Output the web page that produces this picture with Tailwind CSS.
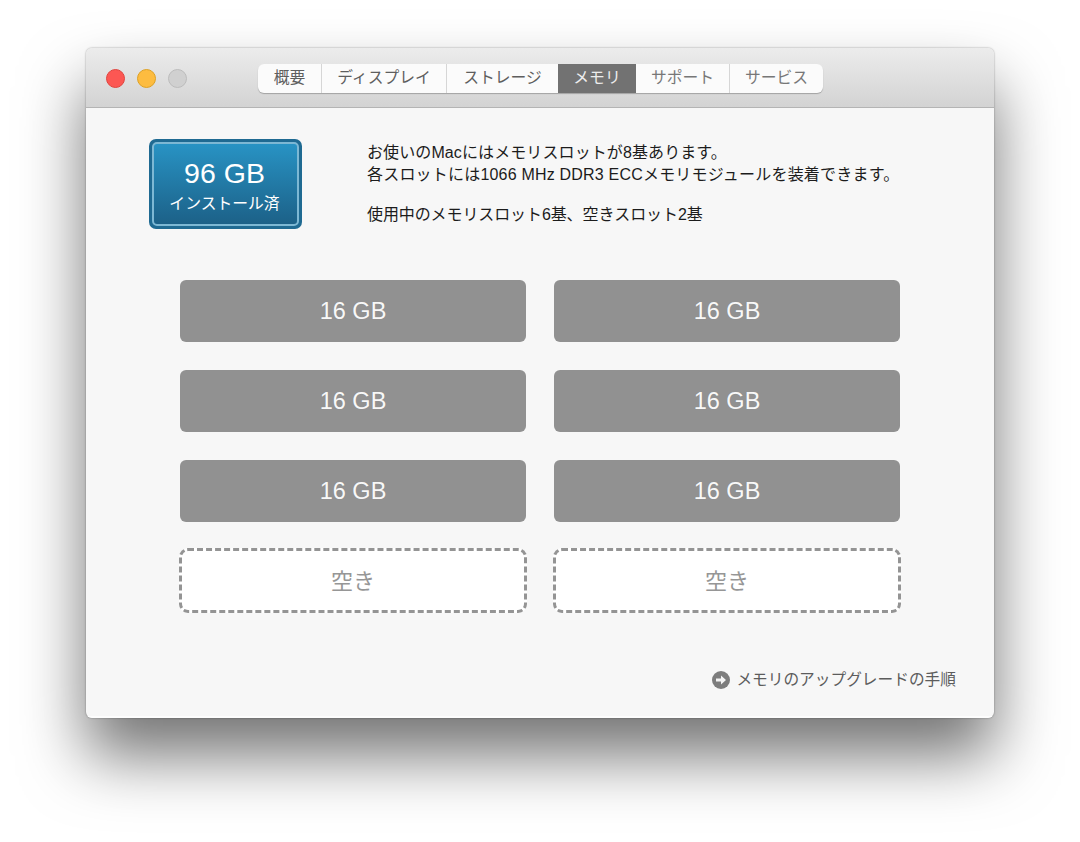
<!doctype html>
<html lang="ja">
<head>
<meta charset="utf-8">
<script src="https://cdn.jsdelivr.net/npm/@tailwindcss/browser@4"></script>
</head>
<body class="bg-white">
<div class="w-[1080px] h-[842px] overflow-hidden pl-[86px] pt-[48px] bg-white font-['Liberation_Sans','Noto_Sans_CJK_JP',sans-serif]">
  <div class="w-[908px] h-[670px] rounded-[6px] bg-[#f7f7f7] overflow-hidden shadow-[0_38px_64px_rgba(0,0,0,0.55),0_0_2px_rgba(0,0,0,0.4)] flex flex-col">
    <div class="h-[60px] shrink-0 bg-gradient-to-b from-[#ececec] to-[#d3d3d3] border-b border-[#b4b4b4] flex items-center pl-[20px] relative">
      <div class="flex gap-[12px] mt-[2px]">
        <div class="w-[19px] h-[19px] rounded-full bg-[#fc5753] border border-[#e0443e]"></div>
        <div class="w-[19px] h-[19px] rounded-full bg-[#fdbc40] border border-[#dea123]"></div>
        <div class="w-[19px] h-[19px] rounded-full bg-[#d0d0d0] border border-[#bcbcbc]"></div>
      </div>
      <div class="ml-[71px] mt-[1px] flex h-[29px] w-[565px] rounded-[6px] bg-[#fbfbfb] text-[15.8px] text-[#5e5e5e] shadow-[0_1px_1px_rgba(0,0,0,0.25)] overflow-hidden">
        <div class="w-[64px] flex items-center justify-center border-r border-[#d6d6d6]">概要</div>
        <div class="w-[125px] flex items-center justify-center border-r border-[#d6d6d6]">ディスプレイ</div>
        <div class="w-[111px] flex items-center justify-center">ストレージ</div>
        <div class="w-[78px] flex items-center justify-center bg-[#727272] text-[#ededed]">メモリ</div>
        <div class="w-[94px] flex items-center justify-center border-r border-[#d6d6d6] text-[#777]">サポート</div>
        <div class="w-[93px] flex items-center justify-center text-[#777]">サービス</div>
      </div>
    </div>
    <div class="flex-1 flex flex-col border-b-2 border-white/70">
      <div class="flex pt-[31px] pl-[63px]">
        <div class="w-[153px] h-[90px] rounded-[7px] bg-[#1f6a92] p-[3px] shrink-0">
          <div class="h-full rounded-[5px] border-2 border-[#7db8d4] bg-gradient-to-b from-[#2893c4] to-[#1c6188] flex flex-col items-center text-white pt-[12px] pr-[2px]">
            <div class="text-[28.5px] leading-[34px]">96 GB</div>
            <div class="text-[15.8px] leading-[20px] mt-[4px]">インストール済</div>
          </div>
        </div>
        <div class="ml-[65px] pt-[3px] text-[16px] leading-[22px] text-[#1c1c1c] whitespace-nowrap">
          <p class="tracking-[0.1px]">お使いのMacにはメモリスロットが8基あります。</p>
          <p class="tracking-[0.2px]">各スロットには1066 MHz DDR3 ECCメモリモジュールを装着できます。</p>
          <p class="mt-[18px] tracking-[-0.1px]">使用中のメモリスロット6基、空きスロット2基</p>
        </div>
      </div>
      <div class="mt-[51px] ml-[94px] w-[720px] grid grid-cols-[346px_346px] gap-x-[28px] gap-y-[28px] text-[23.5px]">
        <div class="h-[62px] rounded-[6px] bg-[#919191] text-white/95 flex items-center justify-center pt-[2px]">16 GB</div>
        <div class="h-[62px] rounded-[6px] bg-[#919191] text-white/95 flex items-center justify-center pt-[2px]">16 GB</div>
        <div class="h-[62px] rounded-[6px] bg-[#919191] text-white/95 flex items-center justify-center pt-[2px]">16 GB</div>
        <div class="h-[62px] rounded-[6px] bg-[#919191] text-white/95 flex items-center justify-center pt-[2px]">16 GB</div>
        <div class="h-[62px] rounded-[6px] bg-[#919191] text-white/95 flex items-center justify-center pt-[2px]">16 GB</div>
        <div class="h-[62px] rounded-[6px] bg-[#919191] text-white/95 flex items-center justify-center pt-[2px]">16 GB</div>
        <div class="-mt-[2px] -mx-[1px] h-[65px] rounded-[9px] bg-white border-[3px] border-dashed border-[#949494] text-[#969696] text-[22px] flex items-center justify-center pt-[2px]">空き</div>
        <div class="-mt-[2px] -mx-[1px] h-[65px] rounded-[9px] bg-white border-[3px] border-dashed border-[#949494] text-[#969696] text-[22px] flex items-center justify-center pt-[2px]">空き</div>
      </div>
      <div class="mt-[55px] mr-[38px] flex justify-end items-center gap-[6px] text-[15.7px] text-[#5c5c5c]">
        <svg class="w-[18px] h-[18px]" viewBox="0 0 18 18"><circle cx="9" cy="9" r="9" fill="#7d7d7d"/><path d="M4 7.6h5V4.6l5 4.4-5 4.4v-3H4z" fill="#f4f4f4"/></svg>
        <span>メモリのアップグレードの手順</span>
      </div>
    </div>
  </div>
</div>
</body>
</html>
